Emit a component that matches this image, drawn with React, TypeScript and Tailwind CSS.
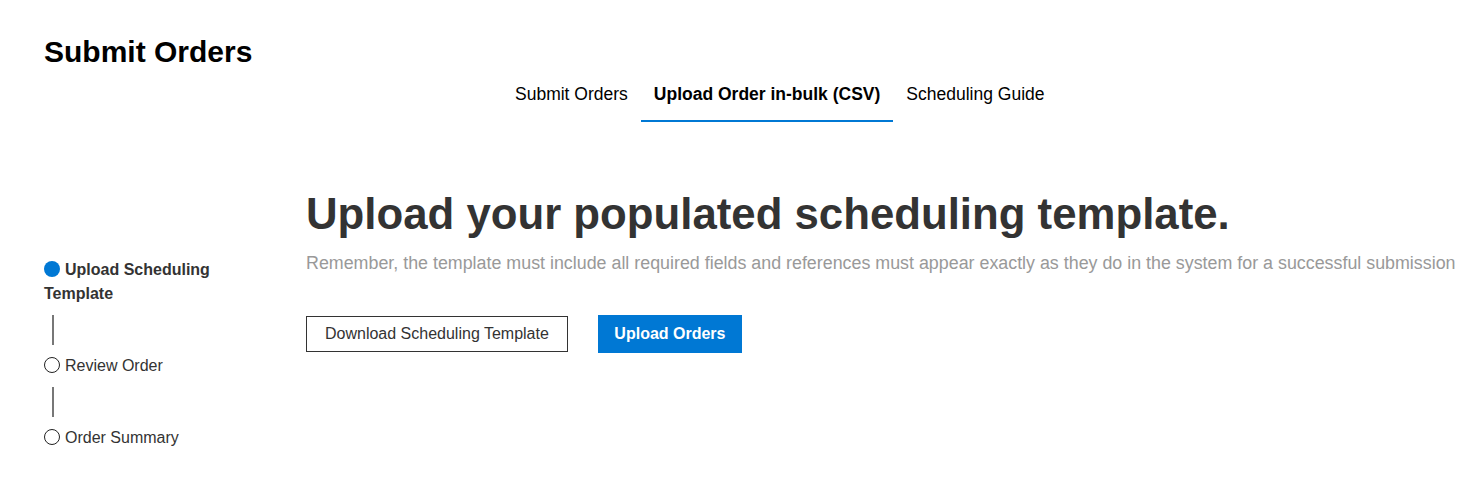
import React from "react";

const tabs = [
  { label: "Submit Orders", active: false },
  { label: "Upload Order in-bulk (CSV)", active: true },
  { label: "Scheduling Guide", active: false },
];

const steps = [
  { label: "Upload Scheduling Template", current: true },
  { label: "Review Order", current: false },
  { label: "Order Summary", current: false },
];

export default function App() {
  return (
    <div
      className="min-h-[487px] bg-white px-[44px] pt-[36px] text-[#333]"
      style={{ fontFamily: '"Liberation Sans", Arial, sans-serif' }}
    >
      <h1 className="text-[30px] font-bold leading-[32px] text-black">Submit Orders</h1>

      {/* tabs */}
      <nav className="flex pl-[458px]">
        {tabs.map((t) => (
          <button
            key={t.label}
            className={`px-[13px] pt-[16px] pb-[16px] text-[17.5px] leading-[20px] text-black border-b-2 ${
              t.active ? "font-bold border-[#0078d4]" : "border-transparent"
            }`}
          >
            {t.label}
          </button>
        ))}
      </nav>

      <div className="flex">
        {/* step list */}
        <aside className="w-[200px] shrink-0 pt-[136px]">
          {steps.map((s, i) => (
            <div key={s.label}>
              {i > 0 && <div className="my-[9px] ml-[8px] h-[30px] w-[2px] bg-[#777]" />}
              <p className={`text-[16px] leading-[24px] ${s.current ? "font-bold" : ""}`}>
                <span
                  className={`mr-[5px] inline-block h-[16px] w-[16px] rounded-full align-[-2px] ${
                    s.current ? "bg-[#0078d4]" : "border-[1.5px] border-[#222]"
                  }`}
                />
                {s.label}
              </p>
            </div>
          ))}
        </aside>

        {/* main */}
        <main className="ml-[62px] pt-[67px]">
          <h2 className="text-[43.75px] font-bold leading-[50px] text-[#333]">
            Upload your populated scheduling template.
          </h2>
          <p className="mt-[14px] whitespace-nowrap text-[17.85px] leading-[20px] text-[#999]">
            Remember, the template must include all required fields and references must appear exactly as they do in the system for a successful submission
          </p>
          <div className="mt-[42px] flex items-center gap-[30px]">
            <button className="h-[36px] border border-[#333] px-[18px] text-[16px] text-[#333]">
              Download Scheduling Template
            </button>
            <button className="h-[38px] bg-[#0078d4] px-[16.5px] text-[16px] font-bold text-white">
              Upload Orders
            </button>
          </div>
        </main>
      </div>
    </div>
  );
}
